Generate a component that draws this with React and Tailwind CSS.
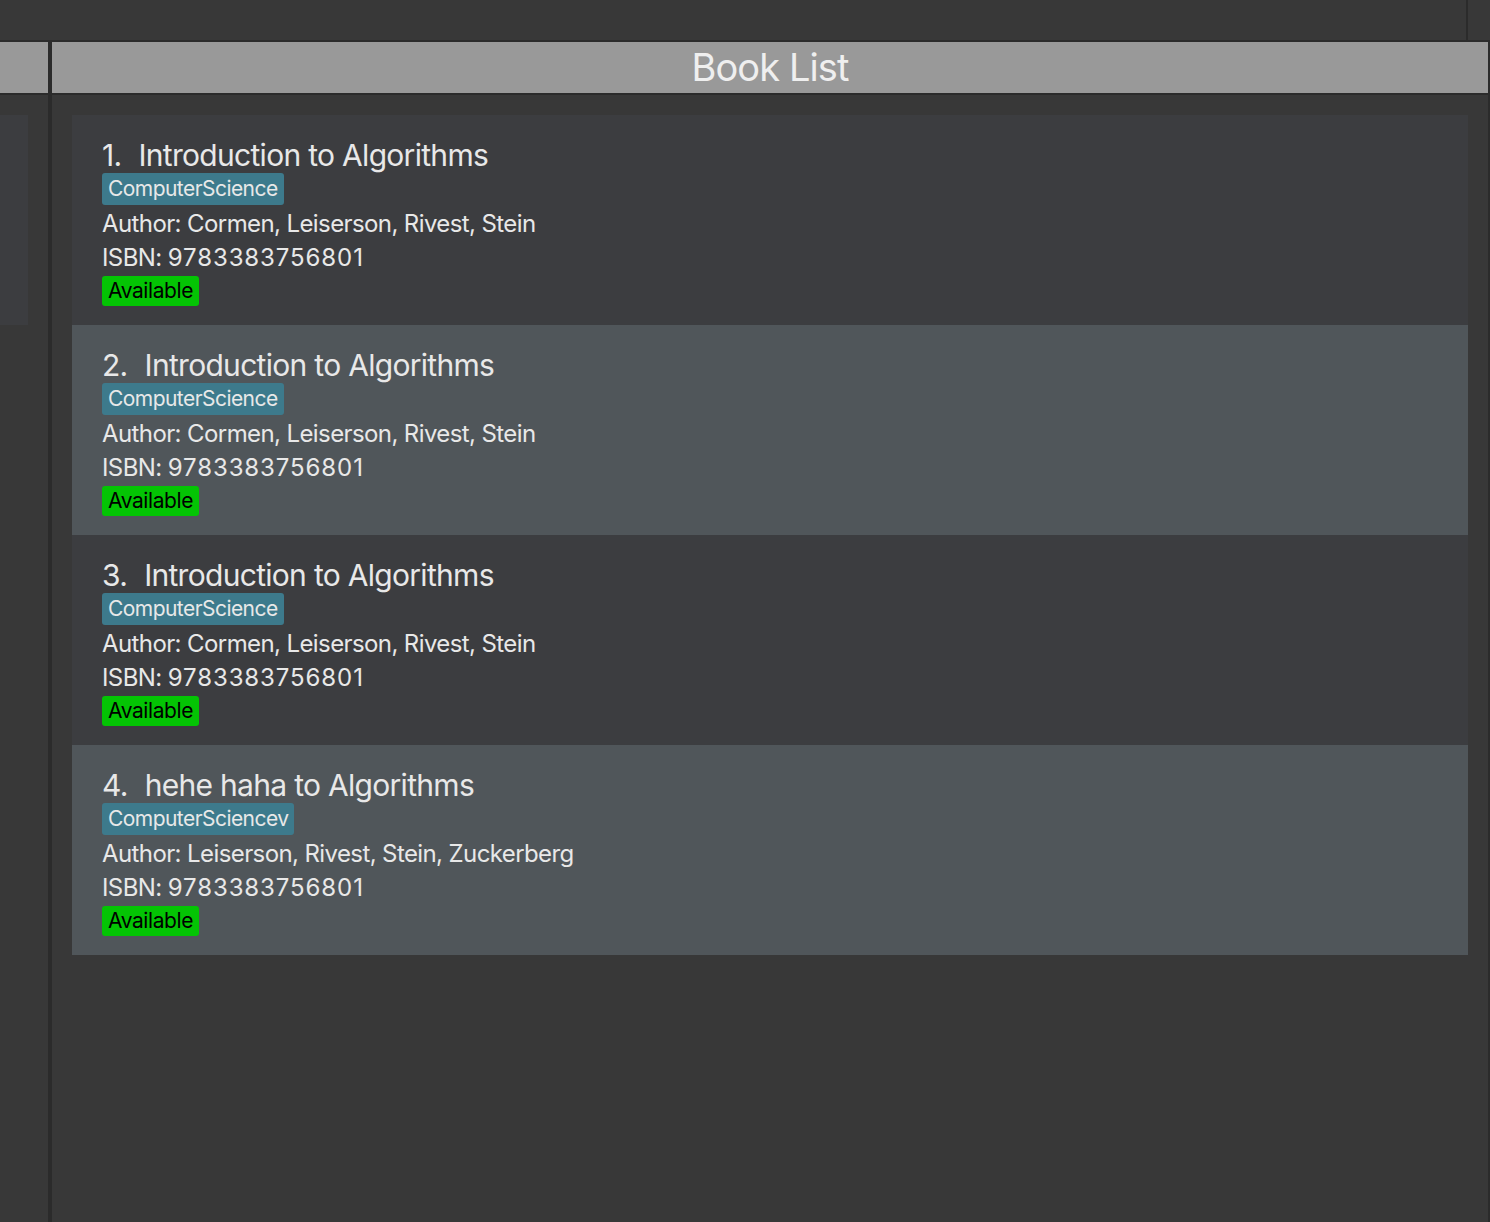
const books = [
  {
    title: "Introduction to Algorithms",
    tag: "ComputerScience",
    author: "Cormen, Leiserson, Rivest, Stein",
    isbn: "9783383756801",
  },
  {
    title: "Introduction to Algorithms",
    tag: "ComputerScience",
    author: "Cormen, Leiserson, Rivest, Stein",
    isbn: "9783383756801",
  },
  {
    title: "Introduction to Algorithms",
    tag: "ComputerScience",
    author: "Cormen, Leiserson, Rivest, Stein",
    isbn: "9783383756801",
  },
  {
    title: "hehe haha to Algorithms",
    tag: "ComputerSciencev",
    author: "Leiserson, Rivest, Stein, Zuckerberg",
    isbn: "9783383756801",
  },
];

const BookCard = ({ book, index }) => {
  const bg = index % 2 === 0 ? "bg-[#3c3d40]" : "bg-[#50565a]";
  return (
    <div className={`${bg} h-[210px] pl-[30px] pt-[20px] flex flex-col items-start text-[#e8e8e8]`}>
      <div className="flex items-baseline text-[30px] leading-[40px] tracking-[-0.7px]">
        <span className="mr-[17px]">{index + 1}.</span>
        <span>{book.title}</span>
      </div>
      <span className="mt-[-2px] bg-[#3d7a8c] rounded-[3px] px-[6px] h-[32px] flex items-center text-[21px] tracking-[-0.55px]">
        {book.tag}
      </span>
      <div className="mt-[2px] text-[24px] leading-[34px] tracking-[-0.6px]">Author: {book.author}</div>
      <div className="text-[24px] leading-[34px] tracking-[-0.6px]">
        ISBN: <span className="tracking-[0.9px]">{book.isbn}</span>
      </div>
      <span className="mt-[1px] bg-[#04c404] text-black rounded-[3px] px-[6px] h-[30px] flex items-center text-[21px] tracking-[-0.4px]">
        Available
      </span>
    </div>
  );
};

const App = () => {
  return (
    <div className="w-[1490px] h-[1222px] bg-[#383838] flex flex-col overflow-hidden" style={{ fontFamily: "Inter, 'Noto Sans', sans-serif" }}>
      {/* top bar */}
      <div className="h-[40px] flex shrink-0">
        <div className="flex-1" />
        <div className="w-[2px] bg-[#2b2b2b]" />
        <div className="w-[22px]" />
      </div>
      <div className="h-[2px] bg-[#2b2b2b] shrink-0" />

      <div className="flex flex-1">
        {/* left column */}
        <div className="w-[48px] flex flex-col">
          <div className="h-[51px] bg-[#999999]" />
          <div className="h-[2px] bg-[#2b2b2b]" />
          <div className="pt-[20px] pr-[20px]">
            <div className="h-[210px] bg-[#3c3d40]" />
          </div>
        </div>
        <div className="w-[4px] bg-[#2b2b2b]" />

        {/* book list */}
        <div className="flex-1 flex flex-col">
          <div className="h-[51px] bg-[#999999] flex items-center justify-center text-[38px] text-[#efefef] tracking-[-0.9px]">
            Book List
          </div>
          <div className="h-[2px] bg-[#2b2b2b]" />
          <div className="px-[20px] pt-[20px] flex flex-col">
            {books.map((book, i) => (
              <BookCard key={i} book={book} index={i} />
            ))}
          </div>
        </div>
        <div className="w-[2px] bg-[#2b2b2b]" />
      </div>
    </div>
  );
};

export default App;
